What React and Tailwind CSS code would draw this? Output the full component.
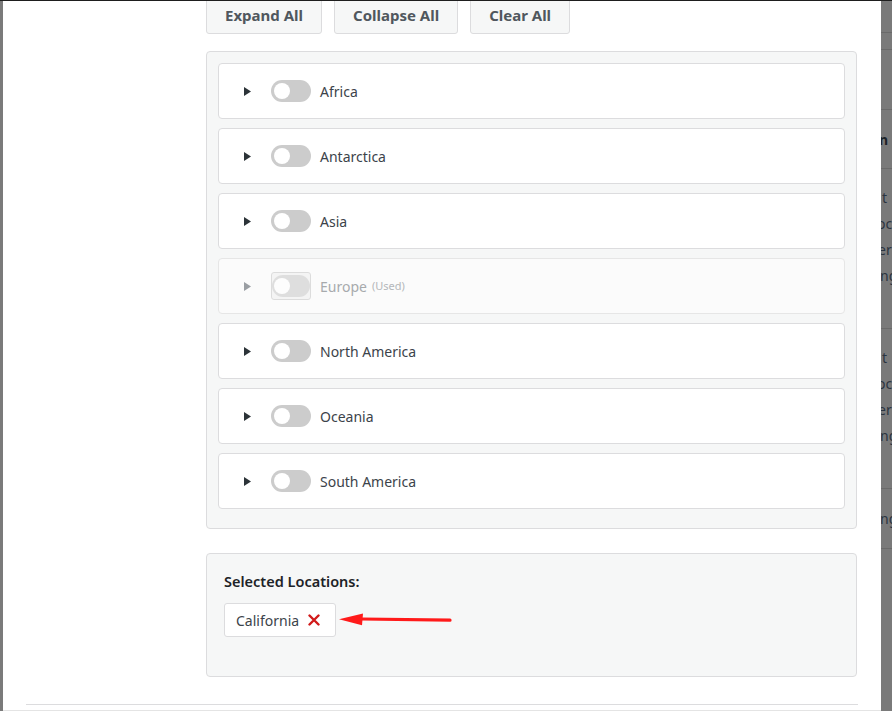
import { useState } from 'react'

const regions = [
  { name: 'Africa' },
  { name: 'Antarctica' },
  { name: 'Asia' },
  { name: 'Europe', used: true },
  { name: 'North America' },
  { name: 'Oceania' },
  { name: 'South America' },
]

function Caret({ faded }) {
  return (
    <svg width="7" height="9" viewBox="0 0 7 9" className="shrink-0">
      <path d="M0 0 L7 4.5 L0 9 Z" fill={faded ? '#9a9ea3' : '#2c3338'} />
    </svg>
  )
}

function Toggle({ disabled }) {
  if (!disabled) {
    return (
      <div className="w-[40px] h-[22px] rounded-full bg-[#cccccc] flex items-center pl-[3px]">
        <div className="w-[16px] h-[16px] rounded-full bg-white" />
      </div>
    )
  }
  return (
    <div className="w-[40px] border border-[#c8c8c8] rounded-[3px] bg-[#f0f0f0] opacity-60 -my-[3px] py-[2px]">
      <div className="w-[38px] h-[22px] rounded-full bg-[#cccccc] flex items-center pl-[2px]">
        <div className="w-[16px] h-[16px] rounded-full bg-white" />
      </div>
    </div>
  )
}

function RegionRow({ name, used }) {
  return (
    <div
      className={`h-[56px] flex items-center pl-[25px] border rounded-[4px] ${
        used ? 'bg-[#fbfbfb] border-[#e6e6e6]' : 'bg-white border-[#dcdcde]'
      }`}
    >
      <Caret faded={used} />
      <div className="ml-[20px]">
        <Toggle disabled={used} />
      </div>
      <span className={`ml-[9px] text-[14px] ${used ? 'text-[#a7aaad]' : 'text-[#3c434a]'}`}>{name}</span>
      {used && <span className="ml-[5px] text-[11px] text-[#b4b7ba]">(Used)</span>}
    </div>
  )
}

function BackdropStrip() {
  const line = 'border-b border-[#6a6a6a]'
  const txt = 'h-[26px] leading-[26px] text-[14px] text-[#2b3440] whitespace-nowrap'
  return (
    <div className="flex-1 bg-[#7a7a7a] overflow-hidden flex flex-col">
      <div className={`h-[32px] shrink-0 ${line}`} />
      <div className={`h-[17px] shrink-0 ${line}`} />
      <div className={`h-[60px] shrink-0 ${line}`} />
      <div className={`h-[59px] shrink-0 flex items-center ${line}`}>
        <span className="text-[14px] font-bold text-[#1d2327] -ml-[2px]">n</span>
      </div>
      <div className={`h-[160px] shrink-0 pt-[16px] ${line}`}>
        <div className={`${txt} ml-[1px]`}>t</div>
        <div className={`${txt} -ml-[4px]`}>oc</div>
        <div className={`${txt} -ml-[3px]`}>er</div>
        <div className={`${txt} -ml-[1px]`}>ng</div>
      </div>
      <div className={`h-[160px] shrink-0 pt-[16px] ${line}`}>
        <div className={`${txt} ml-[1px]`}>t</div>
        <div className={`${txt} -ml-[4px]`}>oc</div>
        <div className={`${txt} -ml-[3px]`}>er</div>
        <div className={`${txt} -ml-[1px]`}>ng</div>
      </div>
      <div className={`h-[60px] shrink-0 flex items-center ${line}`}>
        <span className="text-[14px] text-[#2b3440] -ml-[1px]">ng</span>
      </div>
    </div>
  )
}

export default function App() {
  const [selected, setSelected] = useState(['California'])

  return (
    <div
      className="w-[892px] h-[711px] overflow-hidden flex bg-[#7a7a7a] border-t border-[#1e1e1e]"
      style={{ fontFamily: '"Noto Sans", "Open Sans", sans-serif' }}
    >
      <div className="w-[3px] shrink-0" />

      <div className="w-[878px] shrink-0 bg-white flex flex-col border-b border-[#e4e4e4] overflow-hidden">
        <div className="pl-[203px] pr-[24px]">
          <div className="flex gap-[12px] -mt-[5px]">
            {['Expand All', 'Collapse All', 'Clear All'].map((label) => (
              <button
                key={label}
                className="h-[38px] px-[18px] bg-[#f6f7f7] border border-[#dcdcde] rounded-[3px] text-[15px] font-bold text-[#50575e]"
              >
                {label}
              </button>
            ))}
          </div>

          <div className="mt-[17px] bg-[#f6f7f7] border border-[#dcdcde] rounded-[4px] pt-[11px] px-[11px] pb-[19px] flex flex-col gap-[9px]">
            {regions.map((r) => (
              <RegionRow key={r.name} {...r} />
            ))}
          </div>

          <div className="mt-[24px] h-[124px] bg-[#f6f7f7] border border-[#dcdcde] rounded-[4px] pt-[17px] px-[17px]">
            <div className="text-[14.5px] font-semibold text-[#1d2327] leading-[20px]">Selected Locations:</div>
            <div className="mt-[12px] flex items-center">
              {selected.map((loc) => (
                <div
                  key={loc}
                  className="h-[34px] bg-white border border-[#dcdcde] rounded-[3px] flex items-center pl-[11px] pr-[15px]"
                >
                  <span className="text-[14px] text-[#3c434a]">{loc}</span>
                  <button
                    className="ml-[9px] flex items-center"
                    onClick={() => setSelected(selected.filter((s) => s !== loc))}
                  >
                    <svg width="12" height="12" viewBox="0 0 12 12">
                      <path d="M1.5 1.5 L10.5 10.5 M10.5 1.5 L1.5 10.5" stroke="#d11a1a" strokeWidth="2.4" strokeLinecap="round" />
                    </svg>
                  </button>
                </div>
              ))}
              <svg width="116" height="16" viewBox="0 0 116 16" className="ml-[2px]">
                <path d="M24 7 L112 8.2" stroke="#ff1a1a" strokeWidth="3.2" strokeLinecap="round" />
                <path d="M1 7.2 L25 1.5 L24 13.2 Z" fill="#ff1a1a" />
              </svg>
            </div>
          </div>
        </div>

        <div className="mt-[27px] mx-[23px] border-t border-[#dcdcde]" />
      </div>

      <BackdropStrip />
    </div>
  )
}
